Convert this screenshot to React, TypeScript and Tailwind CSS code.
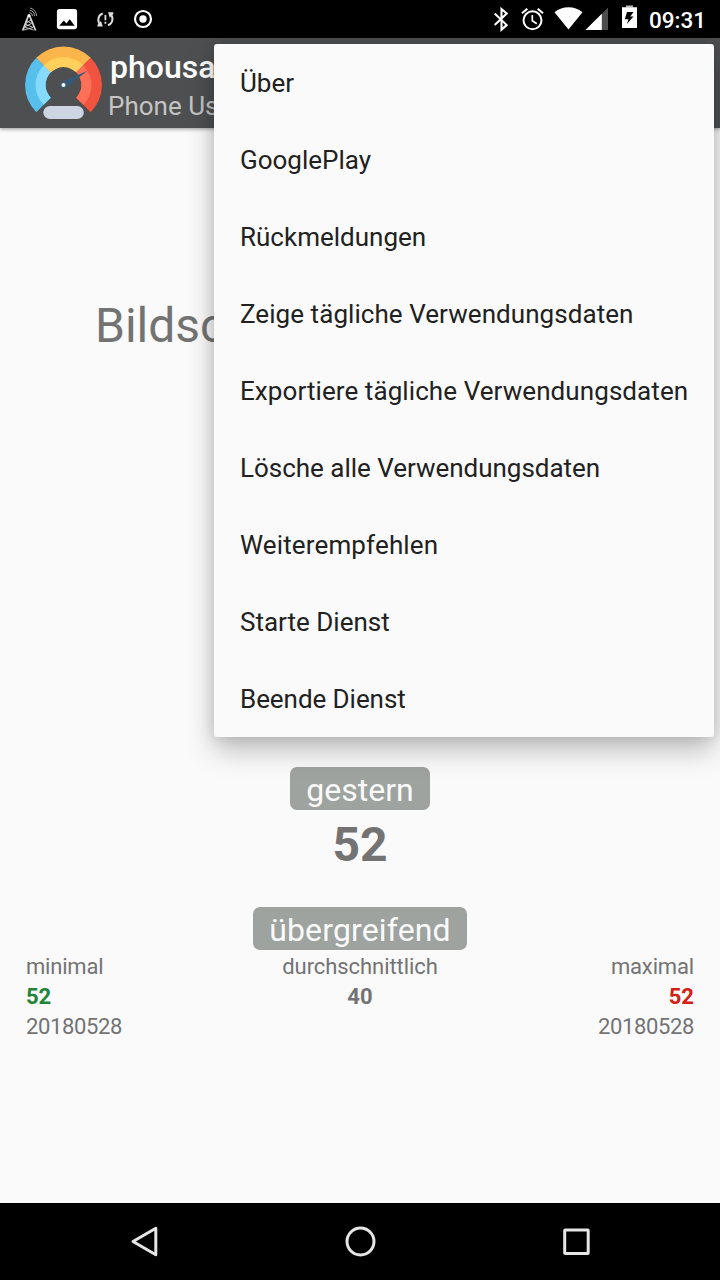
import React from "react";

const menuItems = [
  { label: "Über", spacing: "tracking-normal" },
  { label: "GooglePlay", spacing: "tracking-normal" },
  { label: "Rückmeldungen", spacing: "tracking-normal" },
  { label: "Zeige tägliche Verwendungsdaten", spacing: "tracking-[0.06px]" },
  { label: "Exportiere tägliche Verwendungsdaten", spacing: "tracking-[0.08px]" },
  { label: "Lösche alle Verwendungsdaten", spacing: "tracking-[-0.02px]" },
  { label: "Weiterempfehlen", spacing: "tracking-[0.14px]" },
  { label: "Starte Dienst", spacing: "tracking-normal" },
  { label: "Beende Dienst", spacing: "tracking-[-0.06px]" },
];

function NotificationIcons() {
  return (
    <svg className="block h-[38px] w-[160px]" viewBox="0 0 160 38" fill="none">
      <g stroke="#d4d4d4" strokeWidth="1.3">
        <path d="M28.300 16 22.700 30.500M29.700 16l5.900 14.500" strokeWidth="1.800" />
        <path d="m26.500 20.500 5 3-7 3.500 9 3M31 20l-6 4 8 3.500-9 2.500" strokeWidth="0.900" />
        <circle cx="29" cy="15.500" r="1.500" fill="#fff" stroke="none" />
        <path d="M29.500 12.500a3.500 3.500 0 0 1 3 3.700M29.700 10.200a6 6 0 0 1 4.800 6M30 8a8 8 0 0 1 6.500 8" strokeWidth="0.900" stroke="#aaa" />
      </g>
      <path
        fill="#fff"
        fillRule="evenodd"
        d="M59.500 9h15a2.600 2.600 0 0 1 2.600 2.600v15a2.600 2.600 0 0 1-2.600 2.600h-15a2.600 2.600 0 0 1-2.600-2.600v-15A2.600 2.600 0 0 1 59.500 9ZM59.200 25.700h15.500l-5-6.500-3.300 4.200-2.500-2.800Z"
      />
      <g stroke="#ddd" strokeWidth="2">
        <path d="M102.800 13.500c-5.500 2-5.500 8.500-2.300 11M108 25.200c5.500-2 5.500-8.500 2.300-11" />
        <path d="M105.400 15v5.300M105.400 21.800v2" strokeWidth="1.800" />
      </g>
      <path fill="#ddd" d="M97.500 26.500v-1.700l3.500-3.800 1.800 5.500ZM113.300 12.300v1.700l-3.500 3.800-1.800-5.500Z" />
      <circle cx="143" cy="19" r="8" stroke="#fff" strokeWidth="2.200" />
      <circle cx="143" cy="19" r="3.700" fill="#fff" />
    </svg>
  );
}

function SystemIcons() {
  return (
    <svg className="block h-[38px] w-[150px]" viewBox="490 0 150 38" fill="none">
      <path d="m494.700 13.600 12 11.500-5.200 4.500V9l5.200 4.500-12 11.500" stroke="#fff" strokeWidth="2.100" />
      <circle cx="532.500" cy="20.300" r="9" stroke="#fff" strokeWidth="2" />
      <path d="M532.300 15v5.800l4.500 3" stroke="#fff" strokeWidth="1.700" />
      <path d="m522 13.200 5.300-4.400M543 13.200l-5.300-4.400" stroke="#fff" strokeWidth="2.100" />
      <path d="M554.500 12.300c8-6.700 20-6.700 28 0l-14 17.200Z" fill="#fff" />
      <path d="M585.500 30H608V7.500Z" fill="#4d4d4d" />
      <path d="M585.500 30H601.800V13.700Z" fill="#fff" />
      <path d="M626 5.500h7v2h-7Z" fill="#bbb" />
      <path
        d="M622 7.200h15V28h-15ZM627 12l-2.200 7.200h3.700l-1.600 4.700 6.600-7.300h-3.200l3.200-4.600Z"
        fill="#fff"
        fillRule="evenodd"
      />
    </svg>
  );
}

function GaugeLogo() {
  return (
    <svg className="mt-px ml-[24px] block h-[80px] w-[80px] shrink-0" viewBox="24 44 80 80">
      <path d="M36.300 112.200A38.500 38.500 0 0 1 36.300 57.800L50.800 72.300A18 18 0 0 0 50.800 97.700Z" fill="#56bfeb" />
      <path d="M43.700 104.800A28 28 0 0 1 43.700 65.200L50.800 72.300A18 18 0 0 0 50.800 97.700Z" fill="#84dbff" />
      <path d="M36.300 57.800A38.500 38.500 0 0 1 90.700 57.800L76.200 72.300A18 18 0 0 0 50.800 72.300Z" fill="#fab54b" />
      <path d="M43.700 65.200A28 28 0 0 1 83.300 65.200L76.200 72.300A18 18 0 0 0 50.800 72.300Z" fill="#ffd15c" />
      <path d="M90.700 57.800A38.500 38.500 0 0 1 90.700 112.200L76.200 97.700A18 18 0 0 0 76.200 72.300Z" fill="#f2533e" />
      <path d="M83.300 65.200A28 28 0 0 1 83.300 104.800L76.200 97.700A18 18 0 0 0 76.200 72.300Z" fill="#ff7058" />
      <path d="M87.500 70.700 65 88.200a3.500 3.500 0 1 1-3.200-6.200Z" fill="#345a77" />
      <circle cx="63.500" cy="85" r="2" fill="#fff" />
      <rect x="43.300" y="106" width="40.500" height="13" rx="6.500" fill="#cdd5e2" />
    </svg>
  );
}

function Pill({ children }: { children: React.ReactNode }) {
  return (
    <div className="flex h-[43px] items-center rounded-[7px] bg-[#9ea39f] px-4 pt-[3px] text-[32px] leading-none text-[#fafafa]">
      {children}
    </div>
  );
}

export default function App() {
  return (
    <div className="relative flex h-[1280px] w-[720px] flex-col overflow-hidden bg-[#fafafa] font-['Roboto',sans-serif] text-[#737373]">
      <header className="flex h-[38px] shrink-0 items-center bg-black">
        <NotificationIcons />
        <div className="ml-auto flex items-center pr-[14px]">
          <SystemIcons />
          <span className="w-[66px] pt-[2px] text-right text-[22.500px] leading-none font-medium whitespace-nowrap text-white">09:31</span>
        </div>
      </header>

      <div className="z-10 flex h-[90px] shrink-0 items-center bg-[#4e4f51] shadow-[0_1px_4px_rgba(0,0,0,0.4)]">
        <GaugeLogo />
        <div className="mt-[7px] ml-[4px] flex flex-col">
          <span className="pl-[2px] text-[32px] leading-[38px] font-medium text-white">phousa</span>
          <span className="pt-px text-[26px] leading-[38px] text-[#c4c4c4]">Phone Us</span>
        </div>
      </div>

      <main className="flex flex-1 flex-col">
        <h1 className="mt-[170px] pl-[95px] text-[48px] leading-[56px]">Bildsc</h1>
        <div className="mt-[413px] flex flex-col items-center">
          <Pill>gestern</Pill>
          <strong className="mt-[7px] text-[48px] leading-[56px] font-bold">52</strong>
          <div className="mt-[34px] tracking-[0.150px]">
            <Pill>übergreifend</Pill>
          </div>
        </div>
        <div className="mt-[2px] grid grid-cols-3 px-[26px] text-[22px] leading-[30px]">
          <div>
            <p className="tracking-[-0.2px]">minimal</p>
            <p className="font-bold text-[#218436]">52</p>
            <p className="tracking-[-0.350px]">20180528</p>
          </div>
          <div className="text-center">
            <p className="tracking-[-0.070px]">durchschnittlich</p>
            <p className="font-bold">40</p>
          </div>
          <div className="text-right">
            <p className="tracking-[-0.150px]">maximal</p>
            <p className="font-bold text-[#d32015]">52</p>
            <p className="tracking-[-0.350px]">20180528</p>
          </div>
        </div>
      </main>

      <nav className="flex h-[77px] shrink-0 items-center justify-around bg-black px-9">
        <svg className="block h-[34px] w-[34px]" viewBox="0 0 34 34" fill="none">
          <path d="M28.800 3.200v26.500L6 16.500Z" stroke="#e6e6e6" strokeWidth="3" strokeLinejoin="round" />
        </svg>
        <svg className="block h-[34px] w-[34px]" viewBox="0 0 34 34" fill="none">
          <circle cx="17.500" cy="16.500" r="13.500" stroke="#e6e6e6" strokeWidth="3" />
        </svg>
        <svg className="block h-[34px] w-[34px]" viewBox="0 0 34 34" fill="none">
          <rect x="5.700" y="5" width="23.500" height="23.500" rx="0.500" stroke="#e6e6e6" strokeWidth="3" />
        </svg>
      </nav>

      <ul className="absolute top-[44px] right-[6px] z-20 w-[500px] rounded-[3px] bg-[#fafafa] text-[26px] text-[#212121] shadow-[0_13px_28px_rgba(0,0,0,0.25),0_0_14px_rgba(0,0,0,0.12)]">
        {menuItems.map(({ label, spacing }) => (
          <li key={label} className={`flex h-[77px] items-center px-[26px] pt-[2px] whitespace-nowrap ${spacing}`}>
            {label}
          </li>
        ))}
      </ul>
    </div>
  );
}
